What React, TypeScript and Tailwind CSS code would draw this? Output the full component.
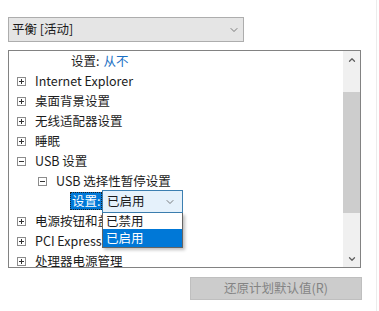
import { ChevronDown, ChevronUp } from "lucide-react";

const font = { fontFamily: '"Noto Sans CJK SC", "Noto Sans", sans-serif' };

function Box({ open }: { open?: boolean }) {
  return (
    <span className="relative mr-[9px] inline-block h-[9px] w-[9px] shrink-0 border border-[#8c8c8c] bg-white">
      <span className="absolute left-[1px] top-[3px] h-[1px] w-[5px] bg-[#333]" />
      {!open && <span className="absolute left-[3px] top-[1px] h-[5px] w-[1px] bg-[#333]" />}
    </span>
  );
}

function Row({ indent, open, children }: { indent: number; open?: boolean; children: React.ReactNode }) {
  return (
    <div className="flex h-[20px] items-center whitespace-nowrap" style={{ paddingLeft: indent }}>
      <Box open={open} />
      <span>{children}</span>
    </div>
  );
}

export default function App() {
  return (
    <div className="relative h-[311px] w-[379px] overflow-hidden bg-white text-[12.5px] text-[#1b1b1b]" style={font}>
      <div className="absolute right-[2px] top-0 h-full w-[1px] bg-[#ececec]" />
      <div className="pl-[8px] pt-[17px]">
        <div className="flex h-[25px] w-[236px] items-center justify-between border border-[#adadad] bg-[#e5e5e5] pl-[3px] pr-[3px]">
          <span>平衡 [活动]</span>
          <ChevronDown className="h-[12px] w-[12px] text-[#555]" strokeWidth={1.5} />
        </div>

        <div className="mt-[8px] flex h-[218px] w-[353px] border border-[#828282] bg-white">
          <div className="relative flex-1 overflow-hidden">
            <div className="flex h-[20px] items-center pl-[62px]">
              <span>设置:</span>
              <span className="ml-[4px] text-[#1a6fc4]">从不</span>
            </div>
            <Row indent={8}>Internet Explorer</Row>
            <Row indent={8}>桌面背景设置</Row>
            <Row indent={8}>无线适配器设置</Row>
            <Row indent={8}>睡眠</Row>
            <Row indent={8} open>USB 设置</Row>
            <Row indent={29} open>USB 选择性暂停设置</Row>
            <div className="flex h-[20px] items-center pl-[61px]">
              <span className="flex h-[18px] items-center border border-dotted border-[#222] bg-[#0078d7] px-[1px] text-white">
                设置:
              </span>
            </div>
            <Row indent={8}>电源按钮和盖</Row>
            <Row indent={8}>PCI Express</Row>
            <Row indent={8}>处理器电源管理</Row>

            <div className="absolute left-[93px] top-[139px] w-[81px]">
              <div className="flex h-[23px] items-center justify-between border border-[#3c7fb1] bg-[#e5f1fb] pl-[4px] pr-[6px]">
                <span>已启用</span>
                <ChevronDown className="h-[12px] w-[12px] text-[#555]" strokeWidth={1.5} />
              </div>
              <div className="border border-t-0 border-[#646464] bg-white shadow-[2px_2px_3px_rgba(0,0,0,0.25)]">
                <div className="flex h-[16px] items-center pl-[3px]">已禁用</div>
                <div className="flex h-[18px] items-center bg-[#0078d7] pl-[3px] text-white">已启用</div>
              </div>
            </div>
          </div>

          <div className="flex w-[17px] flex-col items-center bg-[#f0f0f0]">
            <div className="flex h-[17px] items-center justify-center">
              <ChevronUp className="h-[10px] w-[10px] text-[#606060]" strokeWidth={3} />
            </div>
            <div className="mt-[24px] h-[121px] w-[17px] bg-[#cdcdcd]" />
            <div className="flex-1" />
            <div className="flex h-[17px] items-center justify-center">
              <ChevronDown className="h-[10px] w-[10px] text-[#606060]" strokeWidth={3} />
            </div>
          </div>
        </div>

        <div className="ml-[182px] mt-[9px] flex h-[23px] w-[172px] items-center justify-center border border-[#bfbfbf] bg-[#cccccc] text-[12.5px] text-[#848484]">
          还原计划默认值(R)
        </div>
      </div>
    </div>
  );
}
